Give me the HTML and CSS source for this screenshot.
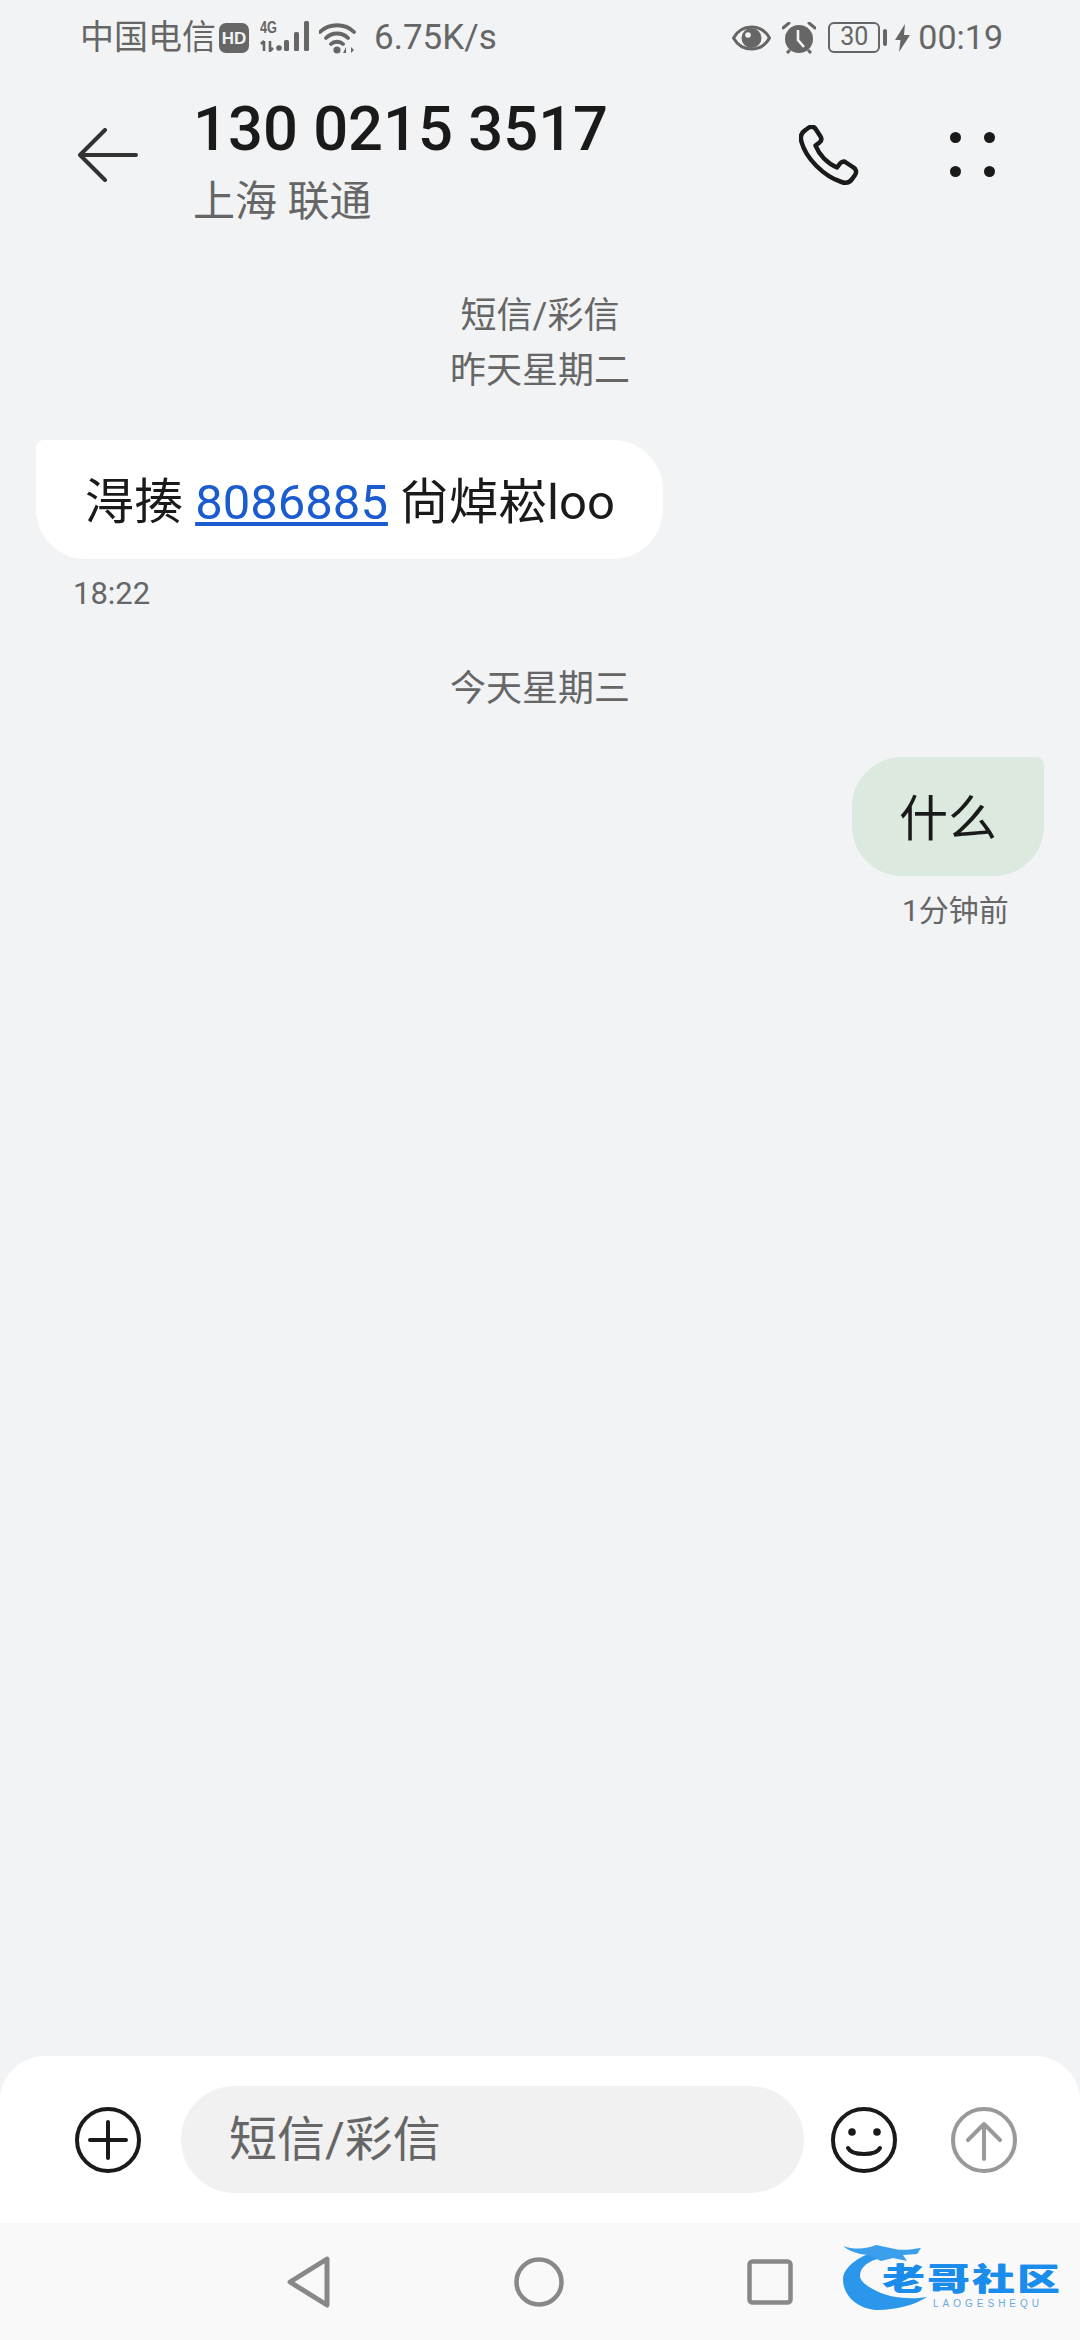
FILE: index.html
```html
<!DOCTYPE html>
<html lang="zh-CN">
<head>
    <meta charset="UTF-8">
    <meta name="viewport" content="width=device-width, initial-scale=1.0">
    <title>短信</title>
    <link rel="stylesheet" href="styles.css">
</head>
<body>
    <div class="status-bar">
        <div class="status-left">
            <span class="carrier">中国电信</span>
            <svg class="hd-icon" width="30" height="30" viewBox="0 0 30 30">
                <rect width="30" height="30" rx="7" fill="#666"/>
                <text x="15" y="21" text-anchor="middle" class="hd-text">HD</text>
            </svg>
            <svg class="signal-icon" width="50" height="36" viewBox="0 -4 50 36">
                <text x="0" y="13" class="net-text" textLength="17" lengthAdjust="spacingAndGlyphs">4G</text>
                <path d="M4 21v10M1 24l3-3M10 21v10l3-3" stroke="#666" stroke-width="2.6" fill="none"/>
                <circle cx="19" cy="28" r="2.8" fill="#666"/>
                <rect x="24" y="20" width="5" height="11" rx="1.5" fill="#666"/>
                <rect x="34" y="12" width="5" height="19" rx="1.5" fill="#666"/>
                <rect x="44" y="1" width="5" height="30" rx="1.5" fill="#666"/>
            </svg>
            <svg class="wifi-icon" width="38" height="32" viewBox="0 0 38 32">
                <path d="M1 10C10 1 26 1 35 10M7 16C13 10 23 10 29 16M12 22C15 19 21 19 24 22" stroke="#666" stroke-width="3.8" fill="none" stroke-linecap="round"/>
                <circle cx="18" cy="28" r="3.6" fill="#666"/>
                <path d="M27 31v-6l-3 6zM32 25v6l3-3z" fill="#666"/>
            </svg>
            <span class="speed">6.75K/s</span>
        </div>
        <div class="status-right">
            <svg class="eye-icon" width="39" height="26" viewBox="0 0 39 26">
                <path d="M1.5 13C6 5 12 2 19.5 2S33 5 37.5 13C33 21 27 24 19.5 24S6 21 1.5 13Z" fill="none" stroke="#666" stroke-width="3"/>
                <circle cx="19.5" cy="13" r="10" fill="#666"/>
                <circle cx="16" cy="10" r="2.8" fill="#f1f3f5"/>
            </svg>
            <svg class="alarm-icon" width="34" height="32" viewBox="0 0 34 32">
                <circle cx="17" cy="17" r="14" fill="#666"/>
                <path d="M1 6l6-5M33 6l-6-5" stroke="#666" stroke-width="3" stroke-linecap="round"/>
                <path d="M5 31l3-3M29 31l-3-3" stroke="#666" stroke-width="3"/>
                <path d="M16 8v10l6 7" stroke="#f1f3f5" stroke-width="2.6" fill="none"/>
            </svg>
            <div class="battery">
                <span class="battery-body">30</span>
                <span class="battery-nub"></span>
            </div>
            <svg class="bolt-icon" width="15" height="28" viewBox="0 0 15 28">
                <path d="M10 0L0 16h5.500L4 28l11-17H9z" fill="#666"/>
            </svg>
            <span class="clock">00:19</span>
        </div>
    </div>

    <div class="header">
        <svg class="back-icon" width="60" height="54" viewBox="0 0 60 54">
            <path d="M27 2L2 27l25 25M2 27h56" fill="none" stroke="#333" stroke-width="4" stroke-linecap="round" stroke-linejoin="round"/>
        </svg>
        <div class="contact">
            <div class="contact-number">130 0215 3517</div>
            <div class="contact-area">上海 联通</div>
        </div>
        <svg class="phone-icon" width="60" height="60" viewBox="0 0 60 60">
            <path d="M10 2.500C13 1 15.500 2 17 4.500L21.500 11.500C23 14 22.500 16 20.500 17.500L16.500 20.500C18.500 25.500 21 29.500 25 33.500C29 37.500 33 40.500 38 42.500L41 38.500C42.500 36.500 45 36 47 37.500L54.500 42.500C57 44 58 47 56 50L53.500 53.500C51 57.500 47 58.500 42.500 57C33 54 24.500 48 17.500 41C10.500 34 5 26 2.500 17C1 12 2.500 7.500 6.500 5Z" fill="none" stroke="#1a1a1a" stroke-width="4.5" stroke-linejoin="round"/>
        </svg>
        <div class="more-dots">
            <span></span><span></span><span></span><span></span>
        </div>
    </div>

    <div class="messages">
        <div class="day-label">短信/彩信<br>昨天星期二</div>
        <div class="bubble bubble-in">
            淂揍 <a class="link" href="#">8086885</a> 尙焯崧loo
        </div>
        <div class="msg-time time-in">18:22</div>
        <div class="day-label day-today">今天星期三</div>
        <div class="bubble bubble-out">什么</div>
        <div class="msg-time time-out">1分钟前</div>
    </div>

    <div class="composer">
        <svg class="round-icon" width="66" height="66" viewBox="0 0 66 66">
            <circle cx="33" cy="33" r="31" fill="none" stroke="#1a1a1a" stroke-width="4"/>
            <path d="M15 33h36M33 15v36" stroke="#1a1a1a" stroke-width="4" stroke-linecap="round"/>
        </svg>
        <div class="input-pill">短信/彩信</div>
        <svg class="round-icon" width="66" height="66" viewBox="0 0 66 66">
            <circle cx="33" cy="33" r="31" fill="none" stroke="#1a1a1a" stroke-width="4"/>
            <circle cx="21" cy="25" r="3.8" fill="#1a1a1a"/>
            <circle cx="46" cy="25" r="3.8" fill="#1a1a1a"/>
            <path d="M17 41C21 49 45 49 49 41" fill="none" stroke="#1a1a1a" stroke-width="4" stroke-linecap="round"/>
        </svg>
        <svg class="round-icon send-icon" width="66" height="66" viewBox="0 0 66 66">
            <circle cx="33" cy="33" r="31" fill="none" stroke="#999" stroke-width="4"/>
            <path d="M33 52V17M17 33l16-16 16 16" fill="none" stroke="#999" stroke-width="4" stroke-linecap="round" stroke-linejoin="round"/>
        </svg>
    </div>

    <div class="nav-bar">
        <svg width="44" height="52" viewBox="0 0 44 52">
            <path d="M40 3L3 26l37 23z" fill="none" stroke="#888" stroke-width="5" stroke-linejoin="round"/>
        </svg>
        <svg width="50" height="50" viewBox="0 0 50 50">
            <circle cx="25" cy="25" r="22.500" fill="none" stroke="#888" stroke-width="4.500"/>
        </svg>
        <svg width="46" height="46" viewBox="0 0 46 46">
            <rect x="2.500" y="2.500" width="41" height="41" rx="3" fill="none" stroke="#888" stroke-width="4.500"/>
        </svg>
        <div class="watermark">
            <svg class="watermark-dragon" width="90" height="70" viewBox="0 0 90 70">
                <path d="M25 11C8 18 0 28 0 36C0 55 18 67 35 67C52 67 72 62 84 54C65 57 48 54 38 50C24 44 17 38 17 33C17 24 25 18 38 15Z" fill="#2b97ea"/>
                <path d="M0 3C12 7 24 6 33 2L52 6C60 8 70 6 78 5L74 11L60 12L64 18L50 15L38 18L25 12C14 11 6 8 0 3Z" fill="#3b9fec"/>
            </svg>
            <span class="watermark-name">老哥社区</span>
            <span class="watermark-sub">LAOGESHEQU</span>
        </div>
    </div>
</body>
</html>
```

FILE: styles.css
```css
* {
    box-sizing: border-box;
}
body {
    margin: 0;
    width: 1080px;
    height: 2340px;
    display: flex;
    flex-direction: column;
    background-color: #f1f3f5;
    font-family: Roboto, "Noto Sans CJK SC", sans-serif;
    overflow: hidden;
}
svg {
    display: block;
    flex: none;
}

/* status bar */
.status-bar {
    height: 75px;
    padding: 21px 77px 0 80px;
    display: flex;
    justify-content: space-between;
    align-items: flex-start;
    color: #666;
    font-size: 34px;
    line-height: 33px;
}
.status-left, .status-right {
    display: flex;
    align-items: center;
    height: 33px;
}
.hd-icon {
    margin-left: 3px;
}
.hd-text {
    font-family: "Liberation Sans", sans-serif;
    font-size: 17px;
    font-weight: 700;
    fill: #f1f3f5;
}
.signal-icon {
    margin: -5px 0 0 11px;
    align-self: flex-start;
}
.net-text {
    font-family: "Liberation Sans", sans-serif;
    font-size: 17px;
    font-weight: 700;
    fill: #666;
}
.wifi-icon {
    margin-left: 9px;
}
.speed {
    margin-left: 17px;
    font-size: 35px;
}
.alarm-icon {
    margin-left: 11px;
}
.battery {
    margin-left: 12px;
    display: flex;
    align-items: center;
}
.battery-body {
    width: 52px;
    height: 31px;
    border: 2.5px solid #666;
    border-radius: 6px;
    font-size: 25px;
    line-height: 26px;
    text-align: center;
}
.battery-nub {
    width: 4px;
    height: 17px;
    margin-left: 3px;
    background-color: #666;
    border-radius: 2px;
}
.bolt-icon {
    margin-left: 8px;
}
.clock {
    margin-left: 8px;
}

/* header */
.header {
    height: 150px;
    padding: 0 0 0 78px;
    display: flex;
    align-items: flex-start;
}
.back-icon {
    margin-top: 53px;
}
.contact {
    margin-left: 55px;
    width: 606px;
}
.contact-number {
    margin-top: 22px;
    font-size: 61.5px;
    line-height: 64px;
    font-weight: 500;
    color: #1a1a1a;
}
.contact-area {
    margin-top: 18px;
    font-size: 42px;
    line-height: 46px;
    color: #666;
}
.phone-icon {
    margin-top: 50px;
}
.more-dots {
    margin: 57px 0 0 91px;
    width: 45px;
    height: 45px;
    display: grid;
    grid-template-columns: 11px 11px;
    grid-template-rows: 11px 11px;
    justify-content: space-between;
    align-content: space-between;
}
.more-dots span {
    background-color: #1a1a1a;
    border-radius: 50%;
}

/* messages */
.messages {
    flex: 1;
    padding-top: 64px;
    display: flex;
    flex-direction: column;
}
.day-label {
    text-align: center;
    font-size: 36px;
    line-height: 55px;
    color: #666;
}
.day-today {
    margin-top: 48px;
}
.bubble {
    height: 119px;
    padding-top: 6px;
    font-size: 49px;
    line-height: 113px;
    color: #1a1a1a;
}
.bubble-in {
    margin: 41px 0 0 36px;
    width: 627px;
    padding-left: 49px;
    background-color: #fff;
    border-radius: 8px 50px 50px 50px;
    white-space: nowrap;
}
.link {
    color: #1a5bd0;
}
.bubble-out {
    margin: 40px 0 0 852px;
    width: 192px;
    text-align: center;
    background-color: #dce9df;
    border-radius: 50px 8px 50px 50px;
}
.msg-time {
    font-size: 30px;
    line-height: 40px;
    color: #666;
}
.time-in {
    margin: 15px 0 0 73px;
    font-size: 31px;
}
.time-out {
    margin: 15px 0 0 902px;
}

/* input */
.composer {
    height: 167px;
    padding: 30px 0 0 75px;
    display: flex;
    align-items: flex-start;
    background-color: #fff;
    border-radius: 45px 45px 0 0;
}
.round-icon {
    margin-top: 21px;
}
.send-icon {
    margin-left: 54px;
}
.input-pill {
    width: 623px;
    height: 107px;
    margin: 0 27px 0 40px;
    padding-left: 48px;
    background-color: #f1f1f1;
    border-radius: 54px;
    font-size: 48px;
    line-height: 107px;
    color: #666;
}

/* bottom navigation */
.nav-bar {
    position: relative;
    height: 117px;
    display: flex;
    align-items: center;
    justify-content: center;
    gap: 183px;
    background-color: #f9f9f9;
}
.watermark {
    position: absolute;
    left: 843px;
    top: 20px;
    width: 220px;
    height: 70px;
}
.watermark-dragon {
    position: absolute;
    left: 0;
    top: 0;
}
.watermark-name {
    position: absolute;
    left: 39px;
    top: 22px;
    font-family: "Liberation Sans", "Noto Sans CJK SC", sans-serif;
    font-size: 42px;
    line-height: 42px;
    font-weight: 900;
    letter-spacing: 3px;
    color: #1a8cec;
    white-space: nowrap;
    transform: scaleY(0.72);
    transform-origin: left top;
    text-shadow: 1px 0 #1a8cec;
}
.watermark-sub {
    position: absolute;
    left: 90px;
    top: 56px;
    font-family: "Liberation Sans", sans-serif;
    font-size: 10px;
    line-height: 9px;
    letter-spacing: 4px;
    color: #6aa9dc;
}
```
